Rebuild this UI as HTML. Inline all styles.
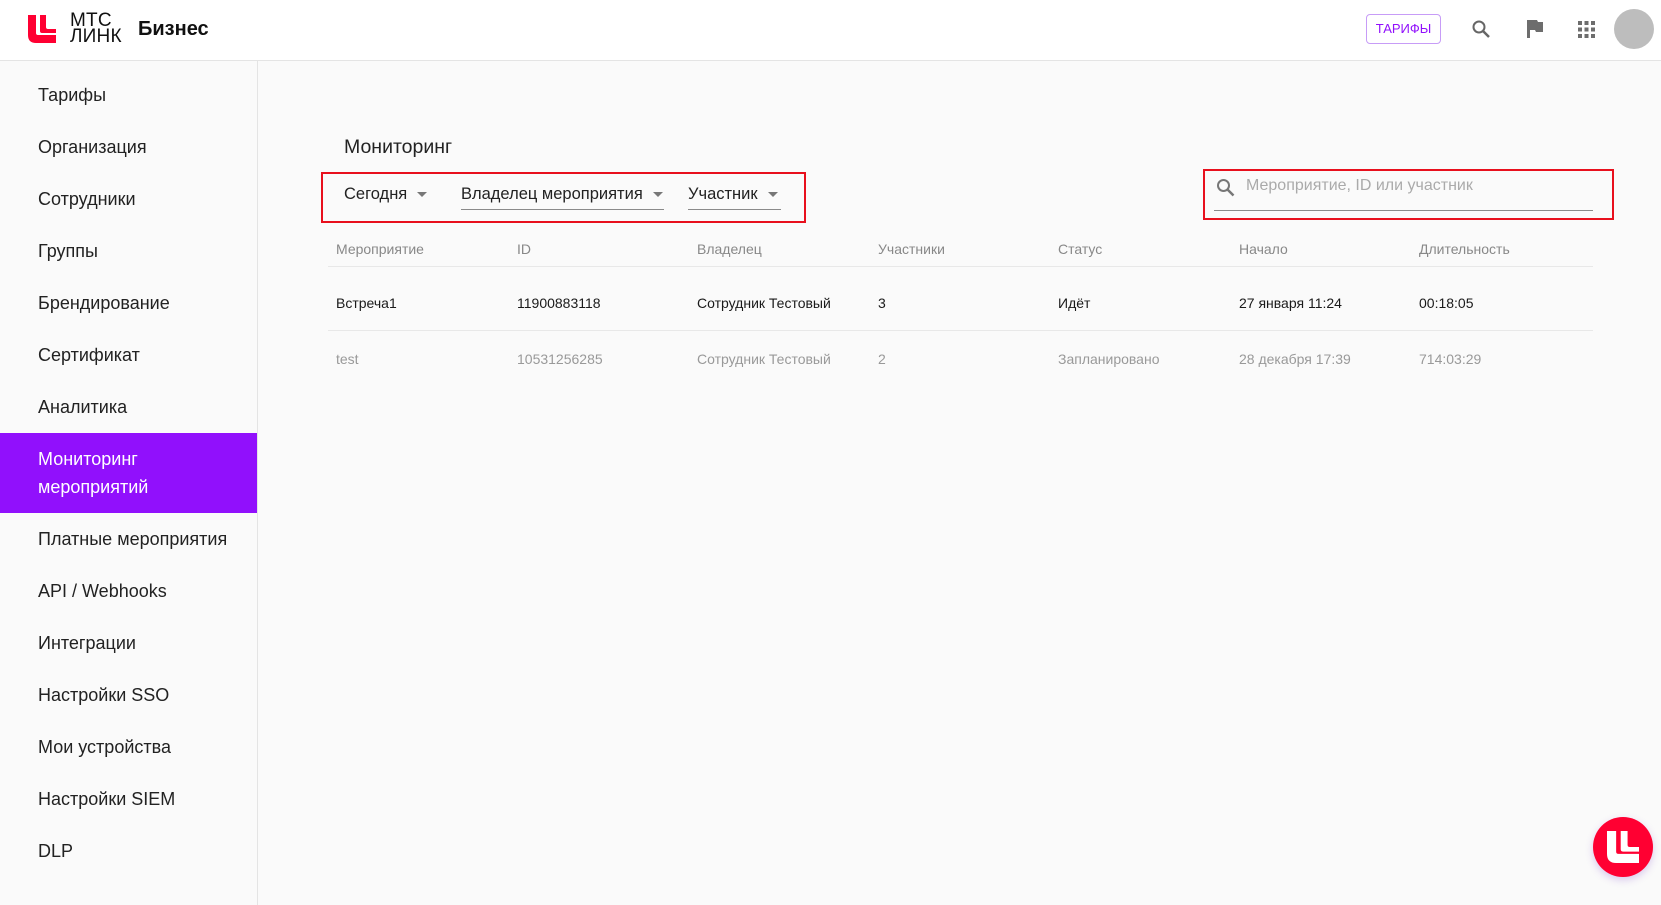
<!DOCTYPE html>
<html><head><meta charset="utf-8"><style>
*{box-sizing:border-box;margin:0;padding:0}
body{width:1661px;height:905px;background:#fafafa;font-family:"Liberation Sans",Arial,sans-serif;position:relative;overflow:hidden;color:#1d1d1d}
.hdr{position:absolute;left:0;top:0;width:1661px;height:61px;background:#fff;border-bottom:1px solid #e4e4e4}
.side{position:absolute;left:0;top:61px;width:258px;height:844px;border-right:1px solid #e4e4e4;background:#fafafa}
.si{position:absolute;left:38px;font-size:18px;color:#222;line-height:22px}
.act{position:absolute;left:0;top:433px;width:257px;height:80px;background:#9110fc}
.a{position:absolute;font-size:14px;line-height:18px;white-space:nowrap}
.th{color:#888}
.r1{color:#1a1a1a}
.r2{color:#999}
.line{position:absolute;left:328px;width:1265px;height:1px;background:#e8e8e8}
.red{position:absolute;border:2px solid #e8101d}
.dd{position:absolute;font-size:16.5px;line-height:20px;color:#222;white-space:nowrap}
.dd:after{content:"";display:inline-block;margin-left:10px;vertical-align:middle;border-left:5px solid transparent;border-right:5px solid transparent;border-top:5px solid #777}
</style></head><body>
<div class="hdr">
 <svg style="position:absolute;left:28px;top:15px" width="28" height="28" viewBox="0 0 28 28"><path d="M0 0h8v18q0 2 2 2h18v8H8Q0 28 0 20Z" fill="#ff0032"/><path d="M12 0h6v12q0 2 2 2h8v4H14q-2 0-2-2Z" fill="#ff0032"/></svg>
 <div style="position:absolute;left:70px;top:13px;font-size:19px;line-height:16px;letter-spacing:0.2px;color:#111">МТС<br>ЛИНК</div>
 <div style="position:absolute;left:138px;top:18px;font-size:20px;font-weight:bold;color:#111">Бизнес</div>
 <div style="position:absolute;left:1366px;top:14px;width:75px;height:30px;border:1px solid #c79cf7;border-radius:4px;color:#9110fc;font-size:13px;text-align:center;line-height:28px">ТАРИФЫ</div>
 <svg style="position:absolute;left:1471px;top:19px" width="20" height="20" viewBox="0 0 20 20"><circle cx="8" cy="8" r="5.5" fill="none" stroke="#666" stroke-width="2"/><path d="M12 12l6 6" stroke="#666" stroke-width="2.5"/></svg>
 <svg style="position:absolute;left:1526px;top:19px" width="18" height="20" viewBox="0 0 18 20"><path d="M1 1h10l1 2h5v10h-7l-1-2H4v8H1z" fill="#6d6d6d"/></svg>
 <svg style="position:absolute;left:1578px;top:21px" width="17" height="17" viewBox="0 0 17 17" fill="#6d6d6d"><rect x="0" y="0" width="4" height="4"/><rect x="6.5" y="0" width="4" height="4"/><rect x="13" y="0" width="4" height="4"/><rect x="0" y="6.5" width="4" height="4"/><rect x="6.5" y="6.5" width="4" height="4"/><rect x="13" y="6.5" width="4" height="4"/><rect x="0" y="13" width="4" height="4"/><rect x="6.5" y="13" width="4" height="4"/><rect x="13" y="13" width="4" height="4"/></svg>
 <div style="position:absolute;left:1614px;top:9px;width:40px;height:40px;border-radius:50%;background:#bdbdbd"></div>
</div>
<div class="side"></div>
<div class="act"></div>
<div class="si" style="top:84px">Тарифы</div>
<div class="si" style="top:136px">Организация</div>
<div class="si" style="top:188px">Сотрудники</div>
<div class="si" style="top:240px">Группы</div>
<div class="si" style="top:292px">Брендирование</div>
<div class="si" style="top:344px">Сертификат</div>
<div class="si" style="top:396px">Аналитика</div>
<div class="si" style="top:445px;color:#fff;line-height:28px">Мониторинг<br>мероприятий</div>
<div class="si" style="top:528px">Платные мероприятия</div>
<div class="si" style="top:580px">API / Webhooks</div>
<div class="si" style="top:632px">Интеграции</div>
<div class="si" style="top:684px">Настройки SSO</div>
<div class="si" style="top:736px">Мои устройства</div>
<div class="si" style="top:788px">Настройки SIEM</div>
<div class="si" style="top:840px">DLP</div>

<div style="position:absolute;left:344px;top:136px;font-size:19.5px;color:#222">Мониторинг</div>
<div class="red" style="left:321px;top:172px;width:485px;height:51px"></div>
<div class="dd" style="left:344px;top:184px">Сегодня</div>
<div class="dd" style="left:461px;top:184px">Владелец мероприятия</div>
<div style="position:absolute;left:461px;top:209px;width:203px;height:1px;background:#8a8a8a"></div>
<div class="dd" style="left:688px;top:184px">Участник</div>
<div style="position:absolute;left:688px;top:209px;width:93px;height:1px;background:#8a8a8a"></div>

<div class="red" style="left:1203px;top:169px;width:411px;height:51px"></div>
<svg style="position:absolute;left:1216px;top:178px" width="20" height="20" viewBox="0 0 20 20"><circle cx="7.5" cy="7.5" r="5.5" fill="none" stroke="#777" stroke-width="2"/><path d="M11.5 11.5l6 6" stroke="#777" stroke-width="2.5"/></svg>
<div style="position:absolute;left:1246px;top:177px;font-size:16px;color:#aaa">Мероприятие, ID или участник</div>
<div style="position:absolute;left:1214px;top:210px;width:379px;height:1px;background:#8a8a8a"></div>

<div class="a th" style="left:336px;top:240px">Мероприятие</div>
<div class="a th" style="left:517px;top:240px">ID</div>
<div class="a th" style="left:697px;top:240px">Владелец</div>
<div class="a th" style="left:878px;top:240px">Участники</div>
<div class="a th" style="left:1058px;top:240px">Статус</div>
<div class="a th" style="left:1239px;top:240px">Начало</div>
<div class="a th" style="left:1419px;top:240px">Длительность</div>
<div class="line" style="top:266px"></div>
<div class="a r1" style="left:336px;top:294px">Встреча1</div>
<div class="a r1" style="left:517px;top:294px">11900883118</div>
<div class="a r1" style="left:697px;top:294px">Сотрудник Тестовый</div>
<div class="a r1" style="left:878px;top:294px">3</div>
<div class="a r1" style="left:1058px;top:294px">Идёт</div>
<div class="a r1" style="left:1239px;top:294px">27 января 11:24</div>
<div class="a r1" style="left:1419px;top:294px">00:18:05</div>
<div class="line" style="top:330px"></div>
<div class="a r2" style="left:336px;top:350px">test</div>
<div class="a r2" style="left:517px;top:350px">10531256285</div>
<div class="a r2" style="left:697px;top:350px">Сотрудник Тестовый</div>
<div class="a r2" style="left:878px;top:350px">2</div>
<div class="a r2" style="left:1058px;top:350px">Запланировано</div>
<div class="a r2" style="left:1239px;top:350px">28 декабря 17:39</div>
<div class="a r2" style="left:1419px;top:350px">714:03:29</div>

<div style="position:absolute;left:1593px;top:817px;width:60px;height:60px;border-radius:50%;background:#ff0032;box-shadow:0 3px 8px rgba(120,60,200,.25)"></div>
<svg style="position:absolute;left:1607px;top:831px" width="32" height="32" viewBox="0 0 28 28"><path d="M0 0h8v18q0 2 2 2h18v8H8Q0 28 0 20Z" fill="#fff"/><path d="M12 0h6v12q0 2 2 2h8v4H14q-2 0-2-2Z" fill="#fff"/></svg>
</body></html>
